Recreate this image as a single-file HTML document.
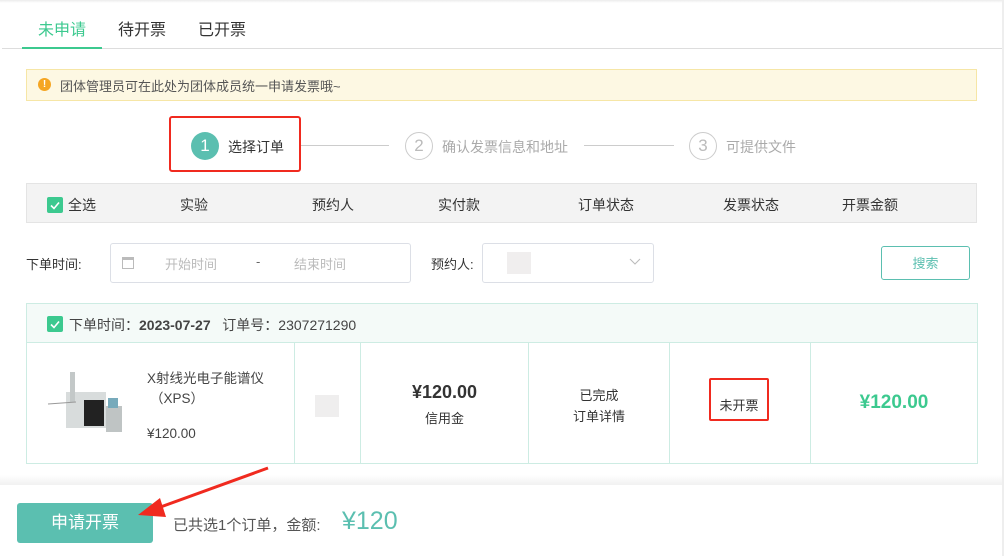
<!DOCTYPE html>
<html><head><meta charset="utf-8"><style>
*{margin:0;padding:0;box-sizing:border-box}
body{width:1004px;height:556px;position:relative;overflow:hidden;background:#fff;font-family:"Liberation Sans","Noto Sans CJK SC",sans-serif;color:#333;font-size:14px}
.a{position:absolute}
.c{text-align:center}
</style></head><body>
<div class="a" style="left:0;top:0;width:1004px;height:3px;background:linear-gradient(#ececec,#fff)"></div>
<div class="a" style="right:0;top:0;width:2px;height:556px;background:#eee"></div>
<div class="a" style="left:38px;top:16px;font-size:16px;color:#3cc98f">未申请</div>
<div class="a" style="left:118px;top:16px;font-size:16px">待开票</div>
<div class="a" style="left:198px;top:16px;font-size:16px">已开票</div>
<div class="a" style="left:2px;top:48px;width:1000px;height:1px;background:#ddd"></div>
<div class="a" style="left:22px;top:47px;width:80px;height:2px;background:#3cc98f"></div>

<div class="a" style="left:26px;top:69px;width:951px;height:32px;background:#fdf8e3;border:1px solid #f6e6a6"></div>
<div class="a" style="left:38px;top:78px;width:13px;height:13px;border-radius:50%;background:#f5a623;color:#fff;font-size:10px;font-weight:bold;line-height:13px"><div style="text-align:center">!</div></div>
<div class="a" style="left:60px;top:76px;font-size:13px;color:#555">团体管理员可在此处为团体成员统一申请发票哦~</div>

<div class="a" style="left:169px;top:116px;width:132px;height:56px;border:2px solid #f02a1f;border-radius:3px"></div>
<div class="a c" style="left:191px;top:132px;width:28px;height:28px;border-radius:50%;background:#5bbfb0;color:#fff;font-size:17px;line-height:28px">1</div>
<div class="a" style="left:228px;top:137px;font-size:14px">选择订单</div>
<div class="a" style="left:301px;top:145px;width:88px;height:1px;background:#ccc"></div>
<div class="a c" style="left:405px;top:132px;width:28px;height:28px;border-radius:50%;border:1px solid #ccc;color:#bbb;font-size:17px;line-height:26px">2</div>
<div class="a" style="left:442px;top:137px;color:#aaa">确认发票信息和地址</div>
<div class="a" style="left:584px;top:145px;width:90px;height:1px;background:#ccc"></div>
<div class="a c" style="left:689px;top:132px;width:28px;height:28px;border-radius:50%;border:1px solid #ccc;color:#bbb;font-size:17px;line-height:26px">3</div>
<div class="a" style="left:726px;top:137px;color:#aaa">可提供文件</div>

<div class="a" style="left:26px;top:183px;width:951px;height:40px;background:#f3f3f3;border:1px solid #e4e4e4"></div>
<div class="a" style="left:47px;top:197px;width:16px;height:16px;background:#3cc98f;border-radius:2px"><svg width="16" height="16"><path d="M4 8.5l3 3 5-6" stroke="#fff" stroke-width="1.6" fill="none"/></svg></div>
<div class="a" style="left:68px;top:195px">全选</div>
<div class="a" style="left:180px;top:195px">实验</div>
<div class="a" style="left:312px;top:195px">预约人</div>
<div class="a" style="left:438px;top:195px">实付款</div>
<div class="a" style="left:578px;top:195px">订单状态</div>
<div class="a" style="left:723px;top:195px">发票状态</div>
<div class="a" style="left:842px;top:195px">开票金额</div>

<div class="a" style="left:26px;top:254px;font-size:13px">下单时间:</div>
<div class="a" style="left:110px;top:243px;width:301px;height:40px;border:1px solid #dcdfe6;border-radius:3px"></div>
<div class="a" style="left:122px;top:257px;width:12px;height:12px;border:1px solid #bbb;border-top-width:3px"></div>
<div class="a" style="left:165px;top:254px;font-size:13px;color:#bbb">开始时间</div>
<div class="a" style="left:256px;top:254px;font-size:13px;color:#666">-</div>
<div class="a" style="left:294px;top:254px;font-size:13px;color:#bbb">结束时间</div>
<div class="a" style="left:431px;top:254px;font-size:13px">预约人:</div>
<div class="a" style="left:482px;top:243px;width:172px;height:40px;border:1px solid #dcdfe6;border-radius:3px"></div>
<div class="a" style="left:507px;top:252px;width:24px;height:22px;background:#f0eeee"></div>
<svg class="a" style="left:628px;top:256px" width="14" height="12"><path d="M2 3l5 5 5-5" stroke="#bbb" fill="none"/></svg>
<div class="a c" style="left:881px;top:246px;width:89px;height:34px;border:1px solid #5bbfb0;border-radius:3px;color:#5bbfb0;line-height:34px;font-size:13px">搜索</div>

<div class="a" style="left:26px;top:303px;width:952px;height:161px;border:1px solid #cdece3"></div>
<div class="a" style="left:27px;top:304px;width:950px;height:39px;background:#f4faf8;border-bottom:1px solid #cdece3"></div>
<div class="a" style="left:47px;top:316px;width:16px;height:16px;background:#3cc98f;border-radius:2px"><svg width="16" height="16"><path d="M4 8.5l3 3 5-6" stroke="#fff" stroke-width="1.6" fill="none"/></svg></div>
<div class="a" style="left:69px;top:315px;color:#444">下单时间：<b>2023-07-27</b>&nbsp;&nbsp;&nbsp;订单号：2307271290</div>
<div class="a" style="left:294px;top:343px;width:1px;height:120px;background:#cdece3"></div>
<div class="a" style="left:360px;top:343px;width:1px;height:120px;background:#cdece3"></div>
<div class="a" style="left:528px;top:343px;width:1px;height:120px;background:#cdece3"></div>
<div class="a" style="left:669px;top:343px;width:1px;height:120px;background:#cdece3"></div>
<div class="a" style="left:810px;top:343px;width:1px;height:120px;background:#cdece3"></div>
<svg class="a" style="left:46px;top:370px" width="82" height="66"><rect x="20" y="22" width="40" height="36" fill="#d8dcdc"/><rect x="38" y="30" width="20" height="26" fill="#222"/><rect x="24" y="2" width="5" height="30" fill="#c3c8c8"/><line x1="2" y1="34" x2="30" y2="32" stroke="#999"/><rect x="60" y="36" width="16" height="26" fill="#bfc4c4"/><rect x="62" y="28" width="10" height="10" fill="#7ab"/></svg>
<div class="a" style="left:147px;top:367px;font-size:13.5px;color:#444">X射线光电子能谱仪</div>
<div class="a" style="left:150px;top:387px;font-size:13.5px;color:#444">（XPS）</div>
<div class="a" style="left:147px;top:426px;font-size:13.5px;color:#444">¥120.00</div>
<div class="a" style="left:315px;top:395px;width:24px;height:22px;background:#efeeee"></div>
<div class="a c" style="left:361px;top:382px;width:167px;font-size:18px;font-weight:bold;color:#333">¥120.00</div>
<div class="a c" style="left:361px;top:408px;width:167px;font-size:13px">信用金</div>
<div class="a c" style="left:529px;top:385px;width:140px;font-size:13px">已完成</div>
<div class="a c" style="left:529px;top:406px;width:140px;font-size:13px">订单详情</div>
<div class="a" style="left:709px;top:378px;width:60px;height:43px;border:2px solid #f02a1f;border-radius:2px"></div>
<div class="a c" style="left:709px;top:395px;width:60px;font-size:13px">未开票</div>
<div class="a c" style="left:811px;top:392px;width:166px;font-size:19px;font-weight:bold;color:#3cc98f">¥120.00</div>

<div class="a" style="left:0;top:475px;width:1002px;height:10px;background:linear-gradient(#fff,#f1f1f1)"></div>
<div class="a" style="left:0;top:485px;width:1002px;height:71px;background:#fff"></div>
<div class="a c" style="left:17px;top:503px;width:136px;height:40px;background:#5bbfb0;border-radius:3px;color:#fff;font-size:17px;line-height:40px">申请开票</div>
<div class="a" style="left:173px;top:514px;font-size:15px;color:#555">已共选1个订单，金额:</div>
<div class="a" style="left:342px;top:507px;font-size:25px;color:#5bbfb0">¥120</div>
<svg class="a" style="left:0;top:0" width="1004" height="556"><line x1="268" y1="468" x2="155" y2="509" stroke="#f02a1f" stroke-width="3"/><polygon points="138,515 160,498 166,517" fill="#f02a1f"/></svg>
</body></html>
